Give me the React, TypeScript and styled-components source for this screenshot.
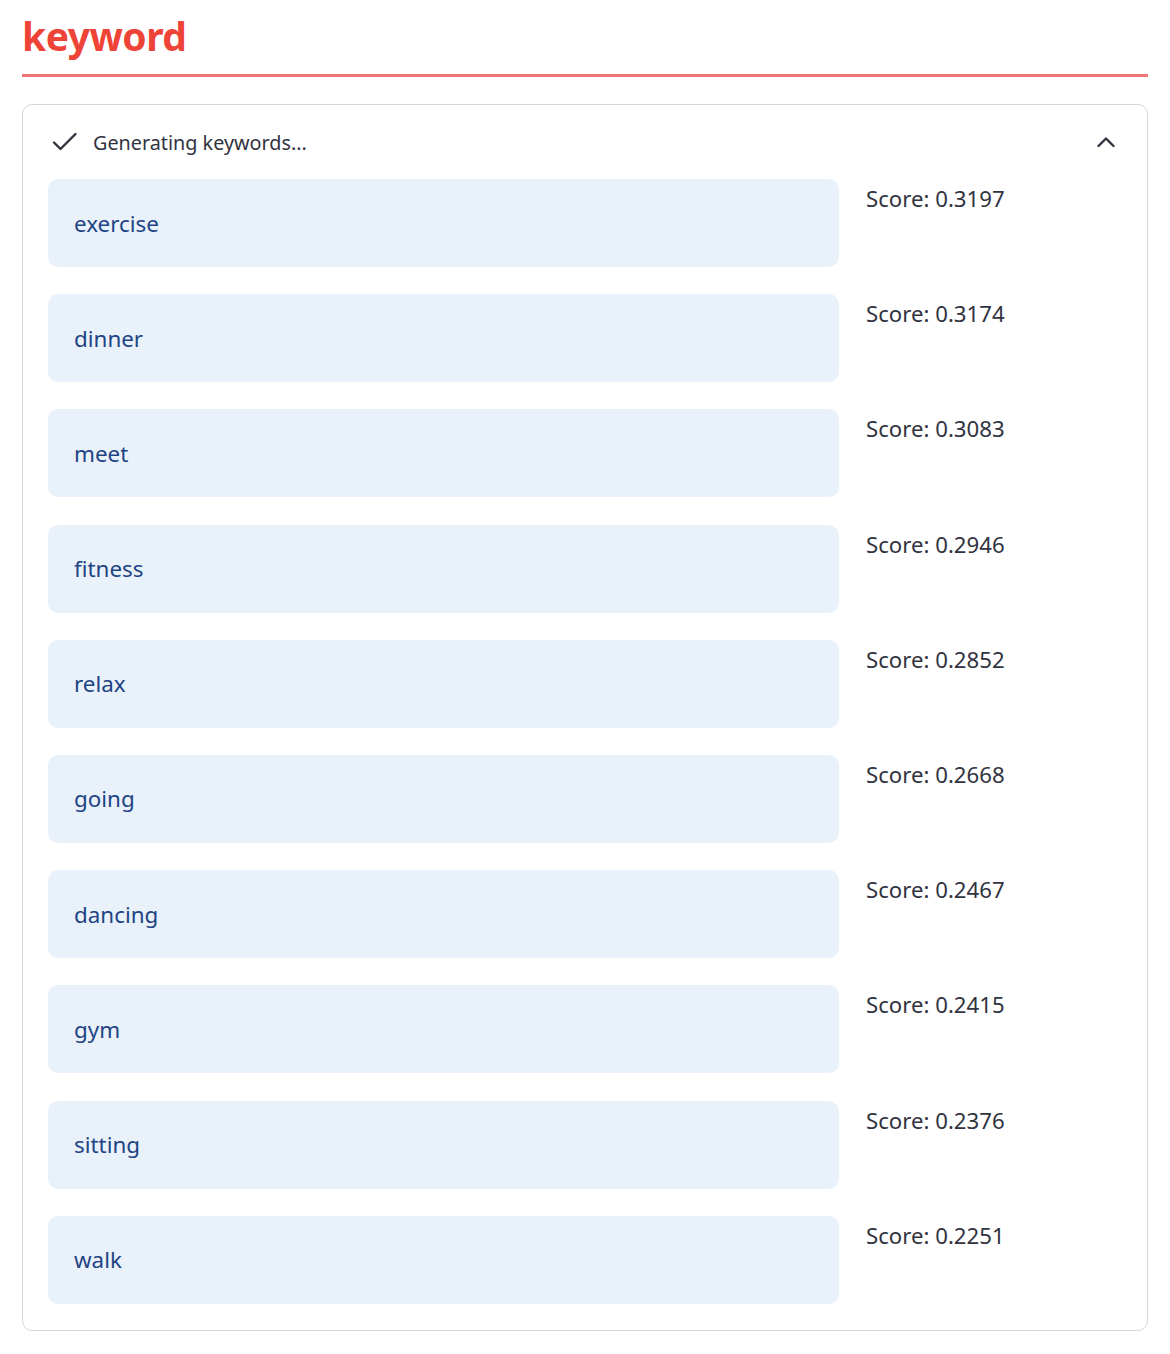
import React from "react";
import styled, { createGlobalStyle } from "styled-components";

const Global = createGlobalStyle`
  html, body { margin: 0; padding: 0; background: #ffffff; }
  body { font-family: "Noto Sans", "Open Sans", sans-serif; color: #31333f; }
`;

const Page = styled.div`
  padding: 0 22px 0 22px;
  width: 1126px;
`;

const Title = styled.h2`
  margin: 0;
  padding-top: 8px;
  font-size: 39px;
  line-height: 56px;
  font-weight: 700;
  color: #ee4438;
  letter-spacing: -0.5px;
  border-bottom: 3px solid #ee7571;
  box-sizing: border-box;
  height: 77px;
`;

const Expander = styled.section`
  margin-top: 27px;
  border: 1px solid #d6d6d9;
  border-radius: 10px;
  padding: 0 0 26px 0;
`;

const Header = styled.div`
  display: flex;
  align-items: center;
  height: 74px;
  padding: 0 32px 0 29px;
  font-size: 19.8px;
  color: #31333f;
  gap: 15px;
`;

const HeaderLabel = styled.span`
  flex: 1;
`;

const List = styled.div`
  display: flex;
  flex-direction: column;
  gap: 27.2px;
  padding: 0 26px 0 25px;
`;

const Row = styled.div`
  display: grid;
  grid-template-columns: 791px 1fr;
  gap: 27px;
  align-items: start;
`;

const KeywordBox = styled.div`
  height: 88px;
  background: #e9f1fb;
  border-radius: 10px;
  display: flex;
  align-items: center;
  padding: 0 26px;
  font-size: 22.4px;
  color: #1e4484;
`;

const Score = styled.div`
  padding-top: 5px;
  font-size: 22.2px;
  line-height: 30px;
  color: #31333f;
`;

const items: [string, string][] = [
  ["exercise", "0.3197"],
  ["dinner", "0.3174"],
  ["meet", "0.3083"],
  ["fitness", "0.2946"],
  ["relax", "0.2852"],
  ["going", "0.2668"],
  ["dancing", "0.2467"],
  ["gym", "0.2415"],
  ["sitting", "0.2376"],
  ["walk", "0.2251"],
];

export default function App() {
  return (
    <Page>
      <Global />
      <Title>keyword</Title>
      <Expander>
        <Header>
          <svg width="26" height="20" viewBox="0 0 26 20" fill="none">
            <path d="M2 10.5 L8.5 17 L23.5 2" stroke="#31333f" strokeWidth="2.4" strokeLinecap="round" strokeLinejoin="round" />
          </svg>
          <HeaderLabel>Generating keywords...</HeaderLabel>
          <svg width="18" height="12" viewBox="0 0 18 12" fill="none">
            <path d="M1.5 10 L9 2.5 L16.5 10" stroke="#31333f" strokeWidth="2.4" strokeLinecap="round" strokeLinejoin="round" />
          </svg>
        </Header>
        <List>
          {items.map(([k, s]) => (
            <Row key={k}>
              <KeywordBox>{k}</KeywordBox>
              <Score>Score: {s}</Score>
            </Row>
          ))}
        </List>
      </Expander>
    </Page>
  );
}
